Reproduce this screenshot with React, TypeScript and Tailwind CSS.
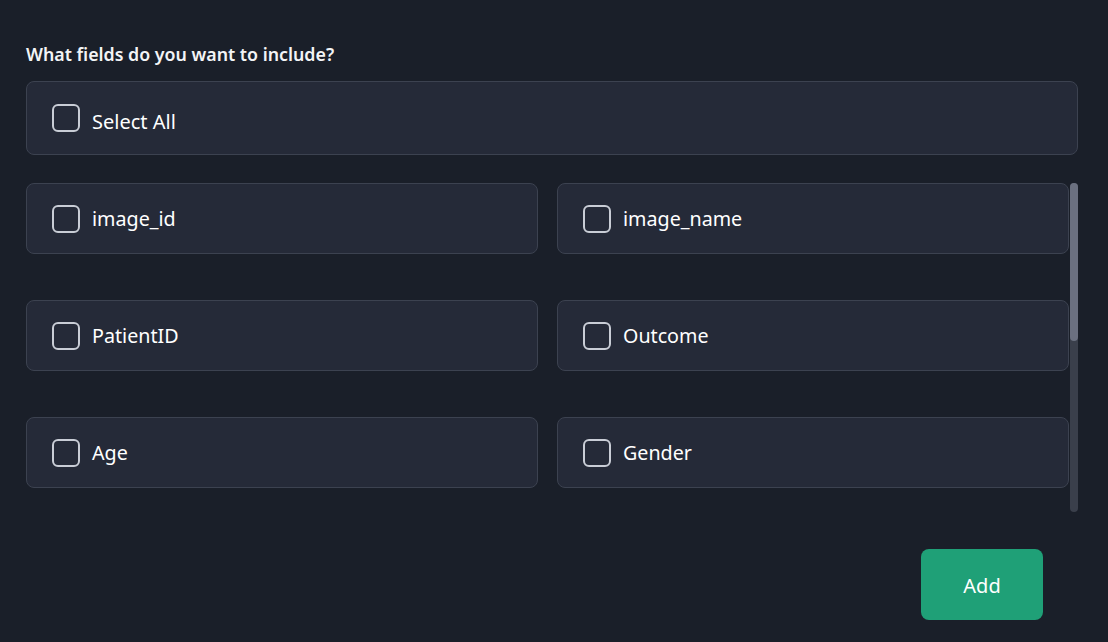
import React, { useEffect, useRef, useState } from 'react';

const FIELDS = [
  'image_id',
  'image_name',
  'PatientID',
  'Outcome',
  'Age',
  'Gender',
  'Diagnosis',
  'StudyDate',
  'Modality',
  'BodyPart',
  'Width',
  'Height',
];

const Box: React.FC<{ checked: boolean }> = ({ checked }) => (
  <span
    className={`flex h-[28px] w-[28px] shrink-0 items-center justify-center rounded-[6px] border-2 ${
      checked ? 'border-[#1fa077] bg-[#1fa077]' : 'border-[#c9cdd6]'
    }`}
  >
    {checked && (
      <svg width="16" height="16" viewBox="0 0 24 24" fill="none" stroke="white" strokeWidth="3">
        <path d="M5 12l5 5L19 7" />
      </svg>
    )}
  </span>
);

const App: React.FC = () => {
  const [selected, setSelected] = useState<string[]>([]);
  const [thumb, setThumb] = useState({ top: 0, height: 158 });
  const scrollRef = useRef<HTMLDivElement>(null);
  const allOn = selected.length === FIELDS.length;

  const toggle = (f: string) => {
    setSelected((s) => (s.includes(f) ? s.filter((x) => x !== f) : [...s, f]));
  };

  // custom scrollbar, native one is hidden
  const updateThumb = () => {
    const el = scrollRef.current;
    if (!el) return;
    const h = el.clientHeight;
    const height = (h * h) / el.scrollHeight;
    const top = (el.scrollTop / el.scrollHeight) * h;
    setThumb({ top, height });
  };

  useEffect(() => {
    updateThumb();
  }, []);

  return (
    <div
      className="h-[642px] w-full bg-[#1a1f29] pl-[26px] pr-[30px] pt-[42px] text-white"
      style={{ fontFamily: '"Noto Sans", "Open Sans", sans-serif' }}
    >
      <h2 className="mb-[15px] text-[17.8px] leading-6 font-semibold text-[#f3f4f6]">
        What fields do you want to include?
      </h2>

      <label
        onClick={() => setSelected(allOn ? [] : [...FIELDS])}
        className="flex h-[74px] cursor-pointer items-center gap-3 rounded-lg border border-[#3c4250] bg-[#252a38] px-[25px]"
      >
        <Box checked={allOn} />
        <span className="mt-[7px] text-[20px] leading-7">Select All</span>
      </label>

      <div className="mt-[28px] flex h-[329px]">
        <div
          ref={scrollRef}
          onScroll={updateThumb}
          className="h-full flex-1 overflow-y-auto [scrollbar-width:none]"
        >
          <div className="grid grid-cols-2 gap-x-[19px] gap-y-[46px] pb-[29px] pr-px">
            {FIELDS.map((f) => (
              <label
                key={f}
                onClick={() => toggle(f)}
                className="flex h-[71px] cursor-pointer items-center gap-3 rounded-lg border border-[#3c4250] bg-[#252a38] px-[25px]"
              >
                <Box checked={selected.includes(f)} />
                <span className="text-[19.7px] leading-7">{f}</span>
              </label>
            ))}
          </div>
        </div>
        <div className="relative h-full w-2 rounded-full bg-[#3a3f4b]">
          <div
            className="absolute left-0 w-2 rounded-full bg-[#6b7080]"
            style={{ top: thumb.top, height: thumb.height }}
          />
        </div>
      </div>

      <div className="mt-[37px] flex justify-end pr-[35px]">
        <button className="h-[71px] w-[122px] rounded-lg bg-[#1fa077] pt-[3px] text-[20px] text-white">
          Add
        </button>
      </div>
    </div>
  );
};

export default App;
